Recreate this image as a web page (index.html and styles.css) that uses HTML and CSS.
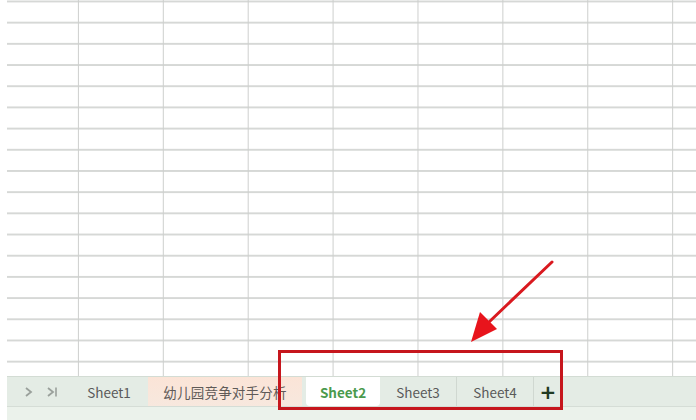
FILE: index.html
```html
<!DOCTYPE html>
<html lang="zh">
<head>
<meta charset="utf-8">
<link rel="stylesheet" href="styles.css">
</head>
<body>
<div class="page">
  <div class="sheet"></div>
  <div class="tabbar">
    <div class="nav">
      <svg class="nav-icon" width="10" height="12" viewBox="0 0 10 12"><path d="M2 2 L7 6 L2 10" fill="none" stroke="#9aa09b" stroke-width="1.8"/></svg>
      <svg class="nav-icon" width="12" height="12" viewBox="0 0 12 12"><path d="M2 2 L7 6 L2 10" fill="none" stroke="#9aa09b" stroke-width="1.8"/><path d="M10 1.5 V10.5" stroke="#9aa09b" stroke-width="1.6"/></svg>
    </div>
    <div class="tab">Sheet1</div>
    <div class="tab tab-cn">幼儿园竞争对手分析</div>
    <div class="tab tab-active">Sheet2</div>
    <div class="tab tab-sep">Sheet3</div>
    <div class="tab tab-sep">Sheet4</div>
    <div class="add">+</div>
  </div>
  <div class="status"></div>
  <div class="highlight"></div>
  <svg class="arrow" width="696" height="420" viewBox="0 0 696 420">
    <line x1="552" y1="262" x2="488" y2="323" stroke="#d9191f" stroke-width="3" stroke-linecap="round"/>
    <polygon points="471,342 480,312 497,329" fill="#e8141c"/>
  </svg>
</div>
</body>
</html>
```
FILE: styles.css
```css
html, body {
  margin: 0;
  padding: 0;
  background: #ffffff;
}
.page {
  position: relative;
  width: 696px;
  height: 420px;
  overflow: hidden;
  font-family: "Noto Sans CJK SC", "Noto Sans", sans-serif;
}
.sheet {
  margin-left: 7px;
  height: 376px;
  background-color: #ffffff;
  background-image:
    linear-gradient(to right, transparent 70.5px, #cdcfcd 70.5px, #cdcfcd 72px, transparent 72px),
    linear-gradient(to bottom, #d6d8d6 1.5px, transparent 1.5px);
  background-position: 0 0, 0 0.5px;
  background-size: 84.9px 100%, 100% 21.19px;
  background-repeat: repeat-x, repeat-y;
}
.tabbar {
  margin-left: 7px;
  height: 31px;
  display: flex;
  align-items: stretch;
  background: #e4ece5;
  border-top: 1px solid #d3dcd4;
  border-bottom: 1px solid #d5ddd6;
  box-sizing: border-box;
  font-size: 13.5px;
  color: #5a5a5a;
}
.nav {
  width: 63px;
  display: flex;
  align-items: center;
  gap: 12px;
  padding-left: 17px;
  box-sizing: border-box;
}
.nav-icon { display: block; }
.tab {
  display: flex;
  align-items: center;
  justify-content: center;
  width: 78px;
  box-sizing: border-box;
}
.tab-cn {
  width: 154px;
  background: linear-gradient(to bottom, #fbe4d7, #f7e8de);
  color: #5f5a57;
  letter-spacing: 0.2px;
}
.tab-active {
  margin-left: 4px;
  width: 74px;
  background: #ffffff;
  color: #4a9a4d;
  font-weight: bold;
  border-radius: 0 0 4px 4px;
}
.tab-sep {
  width: 77px;
  border-right: 1px solid #d0d8d1;
}
.add {
  width: 28px;
  display: flex;
  align-items: center;
  justify-content: center;
  font-family: "DejaVu Sans", sans-serif;
  font-size: 20px;
  font-weight: bold;
  color: #1f3a22;
}
.status {
  margin-left: 7px;
  height: 13px;
  background: #ebf2eb;
}
.highlight {
  position: absolute;
  left: 278px;
  top: 350px;
  width: 285px;
  height: 60px;
  box-sizing: border-box;
  border: 3px solid #c6161d;
}
.arrow {
  position: absolute;
  left: 0;
  top: 0;
}
```
